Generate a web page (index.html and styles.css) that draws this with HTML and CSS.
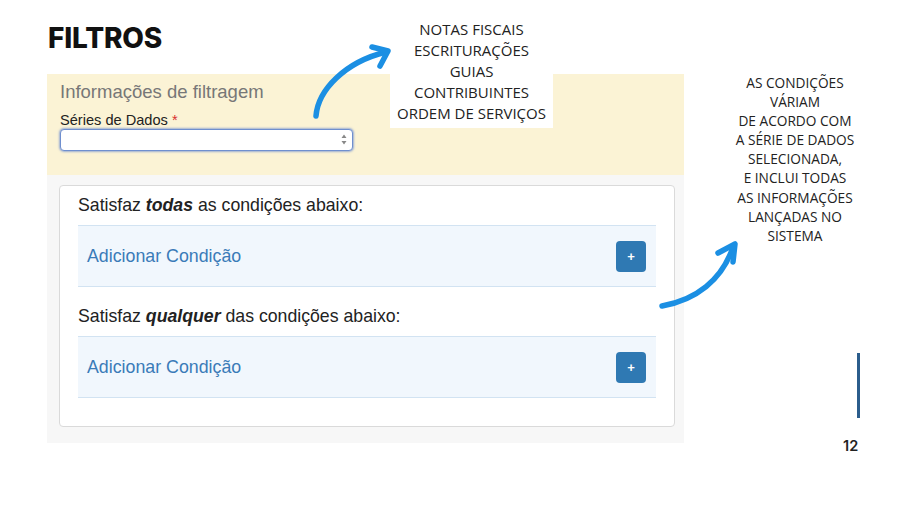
FILE: index.html
```html
<!DOCTYPE html>
<html lang="pt">
<head>
    <meta charset="UTF-8">
    <meta name="viewport" content="width=device-width, initial-scale=1.0">
    <title>Filtros</title>
    <link rel="stylesheet" href="styles.css">
</head>
<body>
    <div class="slide">
        <h1 class="title">FILTROS</h1>

        <!-- Captura da tela de filtros -->
        <div class="panel">
            <div class="panel-top">
                <div class="panel-heading">Informações de filtragem</div>
                <label class="field-label" for="serie">Séries de Dados <span class="req">*</span></label>
                <div class="select-box" id="serie">
                    <span class="select-arrows">
                        <svg width="6" height="11" viewBox="0 0 6 11"><path d="M3 0.5 L5.5 4 L0.5 4 Z M3 10.5 L5.5 7 L0.5 7 Z" fill="#888"/></svg>
                    </span>
                </div>
            </div>
            <div class="panel-body">
                <div class="rules">
                    <p class="rule-title">Satisfaz <b><i>todas</i></b> as condições abaixo:</p>
                    <div class="cond-row">
                        <span class="cond-link">Adicionar Condição</span>
                        <span class="cond-btn">+</span>
                    </div>
                    <p class="rule-title second">Satisfaz <b><i>qualquer</i></b> das condições abaixo:</p>
                    <div class="cond-row">
                        <span class="cond-link">Adicionar Condição</span>
                        <span class="cond-btn">+</span>
                    </div>
                </div>
            </div>
        </div>

        <div class="note note-series">
            NOTAS FISCAIS<br>
            ESCRITURAÇÕES<br>
            GUIAS<br>
            CONTRIBUINTES<br>
            ORDEM DE SERVIÇOS
        </div>

        <div class="note note-cond">
            AS CONDIÇÕES<br>
            VÁRIAM<br>
            DE ACORDO COM<br>
            A SÉRIE DE DADOS<br>
            SELECIONADA,<br>
            E INCLUI TODAS<br>
            AS INFORMAÇÕES<br>
            LANÇADAS NO<br>
            SISTEMA
        </div>

        <!-- Setas -->
        <svg class="arrows" width="900" height="506" viewBox="0 0 900 506">
            <g fill="none" stroke="#1b8fe3" stroke-width="5.5" stroke-linecap="round" stroke-linejoin="round">
                <path d="M316 116 C 318 90, 345 62, 386 52"/>
                <path d="M372 47 L388 51 L380 66"/>
                <path d="M662 306 C 696 300, 722 280, 733 247"/>
                <path d="M718 253 L735 244 L733 262"/>
            </g>
        </svg>

        <div class="side-bar"></div>
        <div class="page-num">12</div>
    </div>
</body>
</html>
```

FILE: styles.css
```css
body {
    margin: 0;
    background-color: #fff;
    font-family: 'Liberation Sans', Arial, sans-serif;
}

.slide {
    position: relative;
    width: 900px;
    height: 506px;
    overflow: hidden;
}

.title {
    margin: 0;
    padding: 24px 0 0 48px;
    font-family: 'Inter', sans-serif;
    font-weight: 800;
    font-size: 28px;
    line-height: 1;
    color: #111;
    letter-spacing: -0.2px;
}

.panel {
    margin: 22px 0 0 47px;
    width: 637px;
}

.panel-top {
    background-color: #fbf3d5;
    height: 101px;
    padding: 7px 0 0 13px;
    box-sizing: border-box;
}

.panel-heading {
    font-size: 18.5px;
    line-height: 21px;
    color: #777;
}

.field-label {
    display: block;
    margin-top: 10px;
    font-size: 14.6px;
    line-height: 17px;
    color: #222;
}

.req {
    color: #d9302c;
}

.select-box {
    position: relative;
    width: 293px;
    height: 22px;
    margin-top: 0;
    box-sizing: border-box;
    border: 1px solid #6f8fcf;
    border-radius: 4px;
    background-color: #fff;
    box-shadow: 0 0 2px 1px rgba(80, 120, 210, 0.55);
}

.select-arrows {
    position: absolute;
    right: 5px;
    top: 4px;
    line-height: 0;
}

.panel-body {
    background-color: #f7f7f7;
    height: 268px;
    padding: 10px 9px 0 12px;
    box-sizing: border-box;
}

.rules {
    height: 242px;
    box-sizing: border-box;
    background-color: #fff;
    border: 1px solid #dadada;
    border-radius: 4px;
    padding: 9px 18px 0 18px;
}

.rule-title {
    margin: 0 0 10px 0;
    font-size: 17.7px;
    line-height: 20px;
    color: #222;
}

.rule-title.second {
    margin-top: 19px;
    margin-bottom: 10px;
}

.cond-row {
    display: flex;
    align-items: center;
    justify-content: space-between;
    height: 62px;
    box-sizing: border-box;
    padding: 0 10px 0 9px;
    background-color: #f1f7fd;
    border-top: 1px solid #d2e3f2;
    border-bottom: 1px solid #d2e3f2;
}

.cond-link {
    font-size: 17.8px;
    color: #3a7bb8;
}

.cond-btn {
    display: flex;
    align-items: center;
    justify-content: center;
    width: 30px;
    height: 31px;
    border-radius: 4px;
    background-color: #2f79b3;
    color: #fff;
    font-size: 13px;
    font-weight: bold;
}

/* anotações do slide */
.note {
    position: absolute;
    font-family: 'Open Sans', sans-serif;
    text-align: center;
    color: #222;
}

.note-series {
    left: 390px;
    top: 17px;
    width: 163px;
    height: 111px;
    background-color: #fff;
    font-size: 15px;
    line-height: 21px;
    padding-top: 2px;
    box-sizing: border-box;
}

.note-cond {
    left: 720px;
    top: 73px;
    width: 150px;
    font-size: 13.7px;
    line-height: 19.1px;
}

.arrows {
    position: absolute;
    left: 0;
    top: 0;
    pointer-events: none;
}

.side-bar {
    position: absolute;
    left: 857px;
    top: 353px;
    width: 3px;
    height: 65px;
    background-color: #2b5d8c;
}

.page-num {
    position: absolute;
    left: 843px;
    top: 437px;
    font-family: 'Inter', sans-serif;
    font-weight: 600;
    font-size: 14.5px;
    color: #222;
}
```
